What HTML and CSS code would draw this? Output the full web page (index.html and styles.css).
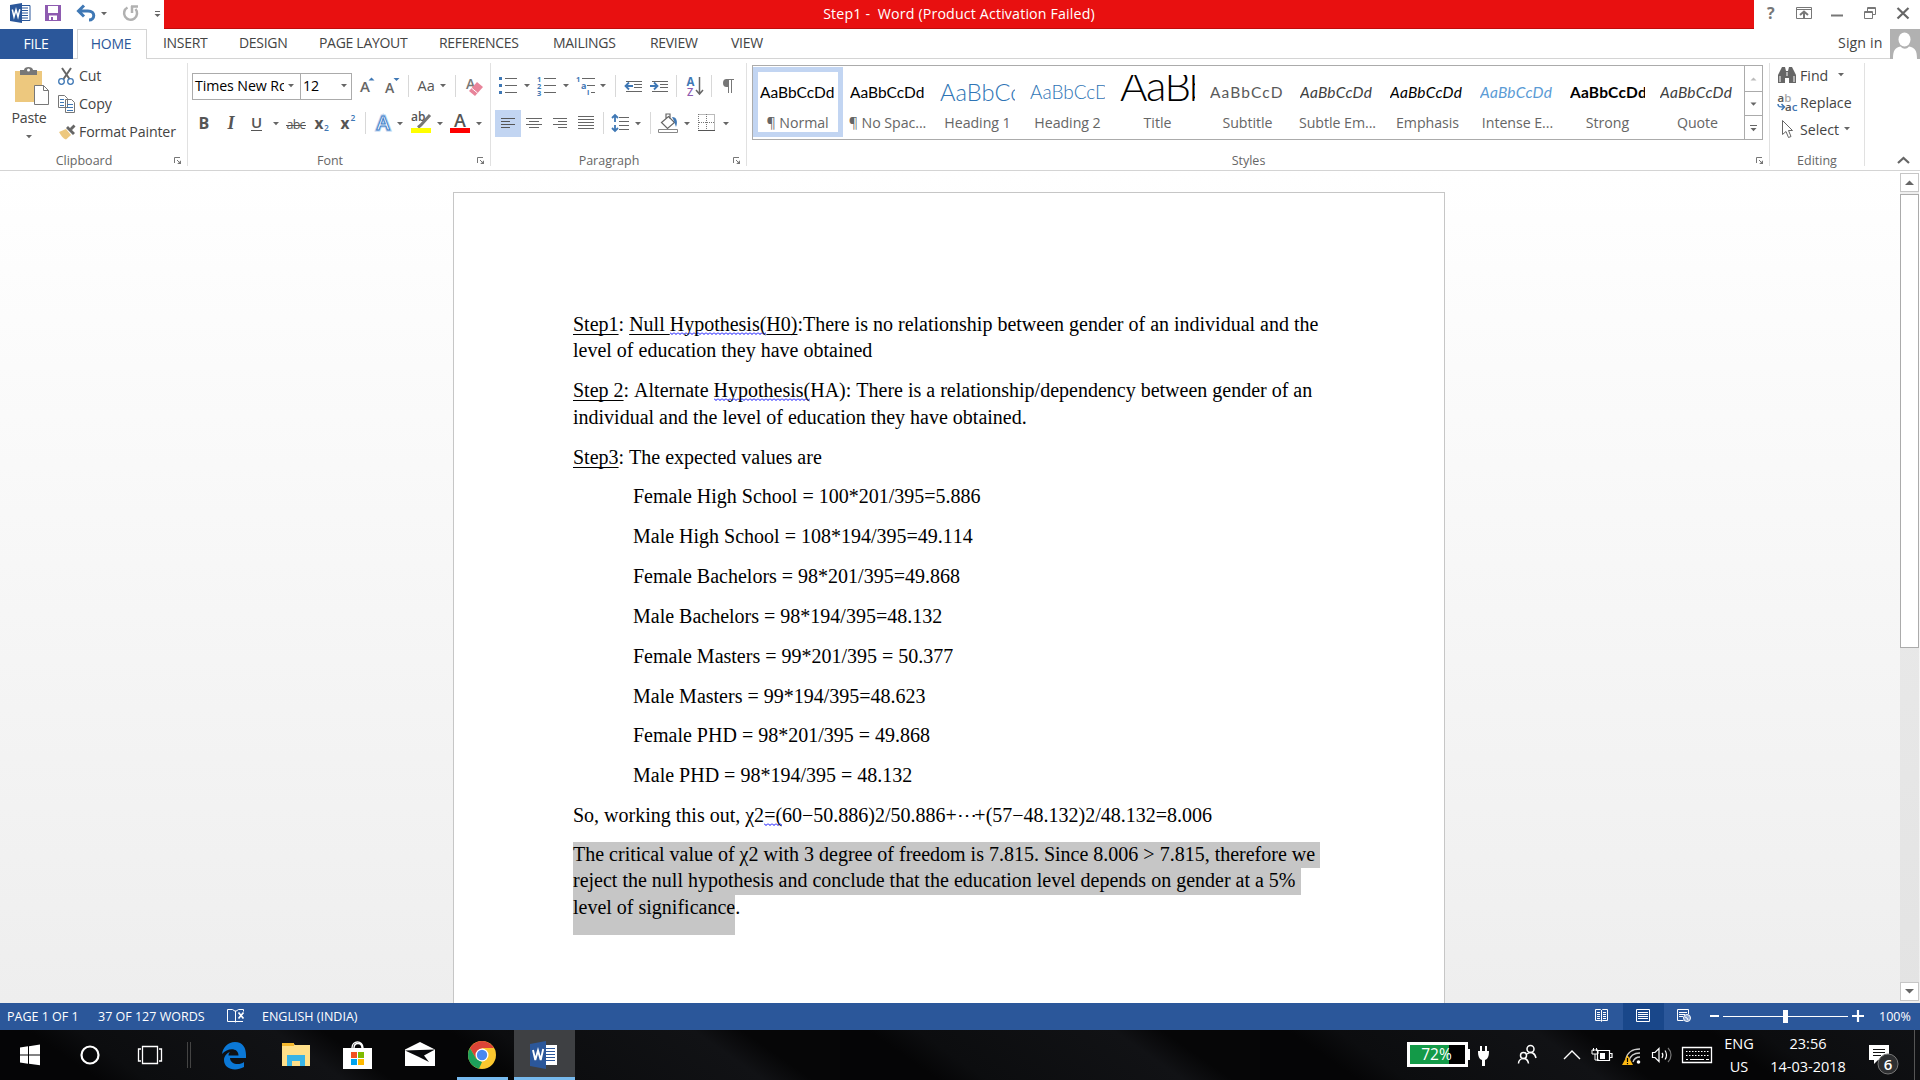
FILE: index.html
```html
<!DOCTYPE html>
<html lang="en">
<head>
<meta charset="utf-8">
<title>Step1 - Word</title>
<link rel="stylesheet" href="styles.css">
</head>
<body>
<svg class="defs" width="0" height="0">
  <defs>
    <path id="caret" d="M0 0h6l-3 3.2z" fill="#666"/>
    <g id="launch" fill="none" stroke="#777"><path d="M.5 6V.5H6M3 3l3.500 3.500"/><path d="M7 3.200V7H3.200z" fill="#777" stroke="none"/></g>
    <g id="word"><path d="M11 2.500h9v15h-9z" fill="#fff" stroke="#2b579a"/><path d="M12 5h6M12 7.500h6M12 10h6M12 12.500h6M12 15h6" stroke="#2b579a"/><path d="M0 2l12-2v20L0 18z" fill="#2b579a"/><path d="M2.300 6.500l1.700 7.300 2-7 2 7 1.800-7.500" fill="none" stroke="#fff" stroke-width="1.500"/></g>
  </defs>
</svg>
<div class="screen">
  <header class="titlebar">
    <div class="quick">
      <svg viewBox="0 0 38 29" width="38" height="29"><use href="#word" x="10" y="3"/></svg>
      <svg viewBox="38 0 32 29" width="32" height="29"><path d="M45 5h16v16H45z" fill="#8e5bb0"/><path d="M48 6h10v7H48zM49 15.500h8V20h-8z" fill="#fff"/><path d="M51 17h2v4h-2z" fill="#8e5bb0"/></svg>
      <svg viewBox="70 0 45 29" width="45" height="29"><path d="M79 11h9c8 0 7 9 1 9M84 5.500L78.500 11l5.500 5.500" fill="none" stroke="#3f78b5" stroke-width="3"/><use href="#caret" x="101" y="12"/></svg>
      <svg viewBox="115 0 35 29" width="35" height="29"><path d="M127.500 7.500a6.500 6.500 0 1 0 8 1.500M131 6.500h7M132 6v7" fill="none" stroke="#b1b1b1" stroke-width="2.500"/></svg>
      <svg viewBox="150 0 14 29" width="14" height="29"><path d="M155 11.500h5" stroke="#666"/><path d="M154.500 14h6l-3 3z" fill="#666"/></svg>
    </div>
    <div class="caption">Step1 -&nbsp; Word (Product Activation Failed)</div>
    <div class="winctl">
      <svg viewBox="1754 0 32 29" width="32" height="29"><text x="1767" y="18.500" font-size="16" font-weight="700" fill="#777">?</text></svg>
      <svg viewBox="1786 0 35 29" width="35" height="29" fill="none" stroke="#777"><path d="M1796.500 7.500h15v11h-15zM1797 9.500h14"/><path d="M1804 18v-6m-4 3l4-3.500 4 3.500" stroke-width="2"/></svg>
      <svg viewBox="1821 0 33 29" width="33" height="29"><path d="M1831 15.500h12" stroke="#777" stroke-width="2"/></svg>
      <svg viewBox="1854 0 33 29" width="33" height="29" fill="none" stroke="#777"><path d="M1864.500 11.500h8v7h-8zM1864 12.500h9M1867.500 11V7.500h8v7H1873M1867 8.500h9"/></svg>
      <svg viewBox="1887 0 33 29" width="33" height="29"><path d="M1897.500 8l11 10.500M1908.500 8l-11 10.500" stroke="#666" stroke-width="2.200"/></svg>
    </div>
  </header>

  <nav class="tabs">
    <div class="tab file">FILE</div>
    <div class="tab home">HOME</div>
    <div class="tab t-insert">INSERT</div>
    <div class="tab t-design">DESIGN</div>
    <div class="tab t-layout">PAGE LAYOUT</div>
    <div class="tab t-refs">REFERENCES</div>
    <div class="tab t-mail">MAILINGS</div>
    <div class="tab t-review">REVIEW</div>
    <div class="tab t-view">VIEW</div>
    <div class="signin">Sign in</div>
    <svg class="avatar" viewBox="0 0 30 30" width="30" height="30"><path d="M0 0h30v30H0z" fill="#b1b1b1"/><ellipse cx="14.500" cy="10.500" rx="6" ry="7" fill="#fff"/><path d="M3 30c0-9 2-11 7.500-12.500 3 3 6 3 8.500 0C25 19 27 21 27 30z" fill="#fff"/></svg>
  </nav>

  <section class="ribbon">
    <div class="group g-clip">
      <div class="tools">
        <div class="paste">
          <svg viewBox="0 63 56 44" width="56" height="44"><path d="M15 71h27v31H15z" fill="#edc87e"/><path d="M20 75v-5h4c0-4 9-4 9 0h4v5z" fill="#777"/><circle cx="28.500" cy="70" r="1.500" fill="#fff"/><path d="M34.500 85.500h9l5 5v14h-14z" fill="#fff" stroke="#777"/><path d="M43.500 85.500v5h5" fill="none" stroke="#777"/></svg>
          <span>Paste</span>
          <svg viewBox="0 128 56 16" width="56" height="16"><use href="#caret" x="26" y="135"/></svg>
        </div>
        <div class="cmds">
          <div class="cmd"><svg viewBox="56 63 24 28" width="24" height="28" fill="none"><path d="M62 68l7.500 11M71 68l-7.500 11" stroke="#666" stroke-width="2"/><circle cx="61.500" cy="81.500" r="2.800" stroke="#3f78b5" stroke-width="1.300"/><circle cx="70.500" cy="81.500" r="2.800" stroke="#3f78b5" stroke-width="1.300"/></svg><span>Cut</span></div>
          <div class="cmd"><svg viewBox="56 91 24 28" width="24" height="28"><path d="M58.500 95.500h6l3 3v9h-9zM65.500 99.500h6l3 3v10h-9z" fill="#fff" stroke="#777"/><path d="M60 99.500h4M60 102.500h4M60 105.500h4M67 104.500h6M67 107.500h6M67 110.500h6" stroke="#3f78b5"/></svg><span>Copy</span></div>
          <div class="cmd"><svg viewBox="56 119 24 28" width="24" height="28"><path d="M59 132l7-3 5 6-5 4.500c-3-1-5-4-7-7.500z" fill="#edc87e"/><path d="M66 128l2-2 7 7-2 2zM70 128l3.500-3.500 2 2L72 130z" fill="#666"/></svg><span>Format Painter</span></div>
        </div>
      </div>
      <div class="label"><span>Clipboard</span><svg width="8" height="8"><use href="#launch"/></svg></div>
    </div>

    <div class="group g-font">
      <div class="rows">
        <div class="row">
          <div class="combo name"><span>Times New Ro</span><svg viewBox="0 0 8 24" width="8" height="24"><use href="#caret" x="0" y="10"/></svg></div>
          <div class="combo size"><span>12</span><svg viewBox="0 0 8 24" width="8" height="24"><use href="#caret" x="0" y="10"/></svg></div>
          <svg viewBox="352 66 28 40" width="28" height="40"><text x="360" y="92" font-size="15" font-weight="600" fill="#666">A</text><path d="M368.500 80.500l3-3 3 3z" fill="#3f78b5"/></svg>
          <svg viewBox="380 66 29 40" width="29" height="40"><text x="385" y="93" font-size="14" font-weight="600" fill="#666">A</text><path d="M393.500 78l3 3 3-3z" fill="#3f78b5"/><path d="M408.500 75v22" stroke="#d8d8d8"/></svg>
          <svg viewBox="409 66 47 40" width="47" height="40"><text x="417.500" y="91" font-size="14.500" fill="#555">Aa</text><use href="#caret" x="440" y="84"/><path d="M455.500 75v22" stroke="#d8d8d8"/></svg>
          <svg viewBox="456 66 34 40" width="34" height="40"><text x="466" y="89" font-size="14" font-weight="600" fill="#777">A</text><path d="M469 91l8-9 6 5-8 9z" fill="#e8849a"/><path d="M471.500 88l6 5" stroke="#fff"/></svg>
        </div>
        <div class="row">
          <svg viewBox="192 106 27 40" width="27" height="40"><text x="198.500" y="129" font-size="16" font-weight="700" fill="#555">B</text></svg>
          <svg viewBox="219 106 25 40" width="25" height="40"><text x="227.500" y="129" font-size="18" font-weight="700" class="serif" font-style="italic" fill="#555">I</text></svg>
          <svg viewBox="244 106 38 40" width="38" height="40"><text x="251" y="128" font-size="15" font-weight="600" fill="#555">U</text><path d="M251 130.500h11" stroke="#555"/><use href="#caret" x="273" y="122"/></svg>
          <svg viewBox="282 106 29 40" width="29" height="40"><text x="286.500" y="129" font-size="12.500" textLength="19" fill="#555">abc</text><path d="M286 125.500h20" stroke="#555"/></svg>
          <svg viewBox="311 106 26 40" width="26" height="40"><text x="314.500" y="129" font-size="15.500" font-weight="700" fill="#555">x</text><text x="324" y="131" font-size="8.500" font-weight="600" fill="#3f78b5">2</text></svg>
          <svg viewBox="337 106 29 40" width="29" height="40"><text x="340.500" y="129" font-size="15.500" font-weight="700" fill="#555">x</text><text x="350.500" y="121" font-size="8.500" font-weight="600" fill="#3f78b5">2</text><path d="M365.500 112v22" stroke="#d8d8d8"/></svg>
          <svg viewBox="366 106 41 40" width="41" height="40"><text x="376.500" y="130" font-size="20" font-weight="600" fill="#fff" stroke="#b9d3f0" stroke-width="3">A</text><text x="376.500" y="130" font-size="20" font-weight="600" fill="#fff" stroke="#3f7fc9">A</text><use href="#caret" x="397" y="122"/></svg>
          <svg viewBox="407 106 39 40" width="39" height="40"><text x="411" y="121" font-size="12" font-weight="600" fill="#555">ab</text><path d="M430 115l-9 10-3 2.500" stroke="#777" stroke-width="3" fill="none"/><path d="M411 128h20v5h-20z" fill="#ff0"/><use href="#caret" x="437" y="122"/></svg>
          <svg viewBox="446 106 44 40" width="44" height="40"><text x="454" y="127" font-size="18" font-weight="600" fill="#555">A</text><path d="M450 128h20v5h-20z" fill="red"/><use href="#caret" x="476" y="122"/></svg>
        </div>
      </div>
      <div class="label"><span>Font</span><svg width="8" height="8"><use href="#launch"/></svg></div>
    </div>

    <div class="group g-para">
      <div class="rows">
        <div class="row">
          <svg viewBox="495 66 39 40" width="39" height="40"><path d="M505 78.500h12M505 85.500h12M505 92.500h12" stroke="#666"/><path d="M499 77h3v3h-3zM499 84h3v3h-3zM499 91h3v3h-3z" fill="#3f78b5"/><use href="#caret" x="524" y="84"/></svg>
          <svg viewBox="534 66 39 40" width="39" height="40"><path d="M544 78.500h12M544 85.500h12M544 92.500h12" stroke="#666"/><g class="tiny"><text x="537" y="82">1</text><text x="537" y="89">2</text><text x="537" y="96">3</text></g><use href="#caret" x="563" y="84"/></svg>
          <svg viewBox="573 66 43 40" width="43" height="40"><path d="M582 78.500h13M587 85.500h8M591 92.500h4" stroke="#666"/><g class="tiny"><text x="576" y="82">1</text><text x="581" y="89" font-size="9">a</text><text x="587" y="95">i</text></g><use href="#caret" x="600" y="84"/><path d="M615.500 75v22" stroke="#d8d8d8"/></svg>
          <svg viewBox="616 66 30 40" width="30" height="40"><path d="M626 81.500h16M634 84.500h8M634 87.500h8M626 91.500h16" stroke="#666"/><path d="M625 86h8m-4-3.500L625.500 86l3.500 3.500" fill="none" stroke="#3f78b5" stroke-width="1.800"/></svg>
          <svg viewBox="646 66 31 40" width="31" height="40"><path d="M652 81.500h16M660 84.500h8M660 87.500h8M652 91.500h16" stroke="#666"/><path d="M650 86h8m-4-3.500l3.500 3.500-3.500 3.500" fill="none" stroke="#3f78b5" stroke-width="1.800"/><path d="M676.500 75v22" stroke="#d8d8d8"/></svg>
          <svg viewBox="677 66 35 40" width="35" height="40"><text x="686.500" y="86" font-size="11.500" font-weight="700" fill="#3f78b5">A</text><text x="687" y="95.500" font-size="11" font-weight="600" fill="#8e5bb0">Z</text><path d="M699.500 77v17m-3.500-4l3.500 4 3.500-4" fill="none" stroke="#666" stroke-width="1.500"/><path d="M711.500 75v22" stroke="#d8d8d8"/></svg>
          <svg viewBox="712 66 34 40" width="34" height="40"><path d="M728 79h-1.500a3.500 4 0 0 0 0 8h1.500z" fill="#777"/><path d="M726 79.500h8M728.500 79v14M731.500 79v14" stroke="#777"/></svg>
        </div>
        <div class="row">
          <svg class="pressed" viewBox="495 110 26 27" width="26" height="27"><path d="M501 118.500h14M501 121.500h9M501 124.500h14M501 127.500h9" stroke="#555"/></svg>
          <svg viewBox="521 106 27 40" width="27" height="40"><path d="M526 118.500h16M529 121.500h10M526 124.500h16M529 127.500h10" stroke="#666"/></svg>
          <svg viewBox="548 106 25 40" width="25" height="40"><path d="M553 118.500h14M558 121.500h9M553 124.500h14M558 127.500h9" stroke="#666"/></svg>
          <svg viewBox="573 106 31 40" width="31" height="40"><path d="M578 116.500h16M578 119.500h16M578 122.500h16M578 125.500h16M578 128.500h16" stroke="#666"/><path d="M603.500 112v22" stroke="#d8d8d8"/></svg>
          <svg viewBox="604 106 47 40" width="47" height="40"><path d="M619 117.500h10M619 121.500h10M619 125.500h10M619 129.500h10" stroke="#666"/><path d="M615 116v6M615 125v6M612 118l3-3 3 3M612 128l3 3 3-3" stroke="#3f78b5" stroke-width="1.800" fill="none"/><use href="#caret" x="635" y="122"/><path d="M650.500 112v22" stroke="#d8d8d8"/></svg>
          <svg viewBox="651 106 42 40" width="42" height="40"><path d="M661.500 122.500l7-6 6 6-7 6zM666 119v-5h4v5" fill="none" stroke="#666" stroke-width="1.200"/><path d="M672 117c5 0 6 5 4 10l-2-6z" fill="#3f78b5"/><path d="M658.500 129.500h19v3h-19z" fill="#fff" stroke="#888"/><use href="#caret" x="684" y="122"/></svg>
          <svg viewBox="693 106 53 40" width="53" height="40"><path d="M698.500 114.500h16v16M698.500 114v16M706.500 114v16M699 122.500h16" fill="none" stroke="#777" stroke-dasharray="1 1"/><path d="M698 130.500h17" stroke="#555"/><use href="#caret" x="723" y="122"/></svg>
        </div>
      </div>
      <div class="label"><span>Paragraph</span><svg width="8" height="8"><use href="#launch"/></svg></div>
    </div>

    <div class="group g-styles">
      <div class="gallery">
        <div class="style on"><div class="sample">AaBbCcDd</div><p>¶ Normal</p></div>
        <div class="style"><div class="sample">AaBbCcDd</div><p>¶ No Spac...</p></div>
        <div class="style"><div class="sample h1">AaBbCc</div><p>Heading 1</p></div>
        <div class="style"><div class="sample h2">AaBbCcD</div><p>Heading 2</p></div>
        <div class="style"><div class="sample title">AaBb</div><p>Title</p></div>
        <div class="style"><div class="sample sub">AaBbCcD</div><p>Subtitle</p></div>
        <div class="style"><div class="sample em subtle">AaBbCcDd</div><p>Subtle Em...</p></div>
        <div class="style"><div class="sample em">AaBbCcDd</div><p>Emphasis</p></div>
        <div class="style"><div class="sample em intense">AaBbCcDd</div><p>Intense E...</p></div>
        <div class="style"><div class="sample strong">AaBbCcDd</div><p>Strong</p></div>
        <div class="style"><div class="sample em subtle">AaBbCcDd</div><p>Quote</p></div>
        <div class="spin">
          <svg viewBox="0 0 17 25" width="17" height="25"><path d="M5.500 14.500h6l-3-3z" fill="#bbb"/></svg>
          <svg viewBox="0 0 17 22" width="17" height="22"><use href="#caret" x="5.500" y="10"/></svg>
          <svg viewBox="0 0 17 23" width="17" height="23"><path d="M5 9.500h7" stroke="#666"/><use href="#caret" x="5.500" y="12"/></svg>
        </div>
      </div>
      <div class="label"><span>Styles</span><svg width="8" height="8"><use href="#launch"/></svg></div>
    </div>

    <div class="group g-edit">
      <div class="edits">
        <div class="cmd"><svg viewBox="1770 62 30 27" width="30" height="27"><path d="M1778 83V75l4-8h3l1 4h2l1-4h3l4 8v8h-7v-5h-4v5z" fill="#666"/><path d="M1780 76v6M1794 76v6M1787 72v4" stroke="#fff"/></svg><span class="w-find">Find</span><svg width="7" height="6"><use href="#caret" y="0"/></svg></div>
        <div class="cmd"><svg viewBox="1770 89 30 27" width="30" height="27"><text x="1777.500" y="101.500" font-size="11.500" font-weight="600" fill="#555">a<tspan fill="#aaa">b</tspan></text><text x="1785" y="111" font-size="11.500" font-weight="600" fill="#555">a<tspan fill="#3f78b5">c</tspan></text><path d="M1778 104c0 3 2 3 6 3m-2.500-3l3 3-3 3" fill="none" stroke="#3f78b5" stroke-width="1.500"/></svg><span>Replace</span></div>
        <div class="cmd"><svg viewBox="1770 116 30 27" width="30" height="27"><path d="M1782.500 120.500v14l3.500-3 2.500 6 2.500-1-2.500-6h4z" fill="#fff" stroke="#666"/></svg><span class="w-select">Select</span><svg width="7" height="6"><use href="#caret" y="0"/></svg></div>
      </div>
      <div class="label"><span>Editing</span></div>
    </div>
    <div class="collapse"><svg viewBox="0 0 13 8" width="13" height="8"><path d="M1 7l5.500-5L12 7" fill="none" stroke="#666" stroke-width="2.200"/></svg></div>
  </section>

  <main class="desk">
    <article class="page">
      <p><u>Step1</u>: <u>Null </u><span class="gram">Hypothesis(</span><u>H0)</u>:There is no relationship between gender of an individual and the<br>level of education they have obtained</p>
      <p><u>Step 2</u>: Alternate <span class="gram">Hypothesis(</span>HA): There is a relationship/dependency between gender of an<br>individual and the level of education they have obtained.</p>
      <p><u>Step3</u>: The expected values are</p>
      <p class="in">Female High School = 100*201/395=5.886</p>
      <p class="in">Male High School = 108*194/395=49.114</p>
      <p class="in">Female Bachelors = 98*201/395=49.868</p>
      <p class="in">Male Bachelors = 98*194/395=48.132</p>
      <p class="in">Female Masters = 99*201/395 = 50.377</p>
      <p class="in">Male Masters = 99*194/395=48.623</p>
      <p class="in">Female PHD = 98*201/395 = 49.868</p>
      <p class="in">Male PHD = 98*194/395 = 48.132</p>
      <p>So, working this out, χ2<span class="gram">=(</span>60−50.886)2/50.886+<span class="dots">⋯</span>+(57−48.132)2/48.132=8.006</p>
      <div class="sel">
        <div class="line mark">The critical value of χ2 with 3 degree of freedom is 7.815. Since 8.006 &gt; 7.815, therefore we</div>
        <div class="line mark">reject the null hypothesis and conclude that the education level depends on gender at a 5%</div>
        <div class="line"><span class="mark last">level of significance</span>.</div>
      </div>
    </article>
    <div class="scroll">
      <svg class="sbtn" viewBox="0 0 17 17" width="17" height="17"><path d="M4 11h9L8.500 6.500z" fill="#666"/></svg>
      <div class="thumb"></div>
      <svg class="sbtn down" viewBox="0 0 17 17" width="17" height="17"><path d="M4 6h9l-4.500 4.500z" fill="#666"/></svg>
    </div>
  </main>

  <footer class="status">
    <span class="s-page">PAGE 1 OF 1</span>
    <span class="s-words">37 OF 127 WORDS</span>
    <svg viewBox="220 1003 42 27" width="42" height="27" fill="none" stroke="#fff"><path d="M235.500 1010.500v12M235 1021.500h-7.500v-12h5l3 2 3-2h5v2M236 1021.500h7" /><path d="M238.500 1012.500l5 6m0-6l-5 6" stroke-width="1.700"/></svg>
    <span class="s-lang">ENGLISH (INDIA)</span>
    <div class="views">
      <svg viewBox="1580 1003 43 27" width="43" height="27" fill="none" stroke="#fff"><path d="M1595.500 1009.500h5l1 1 1-1h5v11h-5l-1 1-1-1h-5zM1601.500 1010v11M1597 1012.500h3M1597 1014.500h3M1597 1016.500h3M1597 1018.500h3M1603 1012.500h3M1603 1014.500h3M1603 1016.500h3M1603 1018.500h3"/></svg>
      <svg class="active" viewBox="1623 1003 41 27" width="41" height="27" fill="none" stroke="#fff"><path d="M1636.500 1009.500h13v12h-13zM1638 1012.500h10M1638 1014.500h10M1638 1016.500h10M1638 1018.500h10"/></svg>
      <svg viewBox="1664 1003 42 27" width="42" height="27" fill="none" stroke="#fff"><path d="M1688.500 1014v-4.500h-11v11h6M1679 1012.500h8M1679 1014.500h6M1679 1016.500h4"/><circle cx="1687" cy="1018" r="3.500" fill="#8aa5d0"/><path d="M1685 1017l2 1 1 2" /></svg>
      <svg viewBox="1706 1003 166 27" width="166" height="27"><path d="M1710 1016h9M1852 1016h12M1858 1010v12" stroke="#fff" stroke-width="2.200"/><path d="M1723 1016.500h125" stroke="#fff"/><path d="M1783 1010h5v13h-5z" fill="#fff"/></svg>
      <span class="s-zoom">100%</span>
    </div>
  </footer>

  <footer class="taskbar">
    <div class="apps">
      <svg viewBox="0 1030 60 50" width="60" height="50"><path d="M20 1047.500l8-1.200v8.200h-8zM29 1046.200l11-1.600v9.900H29zM20 1055.500h8v8.300l-8-1.200zM29 1055.500h11v9.800l-11-1.500z" fill="#fff"/></svg>
      <svg viewBox="60 1030 60 50" width="60" height="50"><circle cx="90" cy="1055" r="8.500" fill="none" stroke="#fff" stroke-width="2.200"/></svg>
      <svg viewBox="120 1030 60 50" width="60" height="50" fill="none" stroke="#fff" stroke-width="1.300"><path d="M142.500 1046.500h15v17h-15zM141 1049h-2.500v12h2.500M159 1049h2.500v12H159"/></svg>
      <svg viewBox="180 1030 30 50" width="30" height="50"><path d="M187.500 1042v26M190.500 1042v26" stroke="#444"/></svg>
      <svg viewBox="210 1030 60 50" width="60" height="50"><path d="M222 1054c1-7 6-12 13-12 8 0 11 6 11 13v3h-16c0 6 9 8 14 4v5c-9 5-20 2-20-7 0-4 3-7 6-8-1 1-1.500 2-1.500 3.500h10c0-8-11-8-16.500-1.500z" fill="#0b78d7"/></svg>
      <svg viewBox="270 1030 60 50" width="60" height="50"><path d="M282 1043h11l2 2h15v21h-28z" fill="#ffe08a"/><path d="M282 1043h12v3h-12z" fill="#f5b92e"/><path d="M287 1066v-11h18v11h-5v-5h-8v5z" fill="#38b4e6"/></svg>
      <svg viewBox="330 1030 60 50" width="60" height="50"><path d="M343 1048h29v21h-29z" fill="#fff"/><path d="M352 1048c0-8 11-8 11 0M354 1048c0-6 8-6 8 0" fill="none" stroke="#fff" stroke-width="1.400"/><path d="M351 1052h6v6h-6z" fill="#f25022"/><path d="M358 1052h6v6h-6z" fill="#7fba00"/><path d="M351 1059h6v6h-6z" fill="#00a4ef"/><path d="M358 1059h6v6h-6z" fill="#ffb900"/></svg>
      <svg viewBox="390 1030 60 50" width="60" height="50"><path d="M405 1049.500l15-7.500 15 7.500v16.500h-30z" fill="#fff"/><path d="M405 1050.500l30-1-11 6 5 6.500-11-5.500z" fill="#08090b"/></svg>
      <svg viewBox="450 1030 64 50" width="64" height="50"><circle cx="482" cy="1055" r="14" fill="#fbc72e"/><path d="M469.900 1048a14 14 0 0 1 24.200 0H482l-6 10.500z" fill="#dc4437"/><path d="M469.900 1048l6.100 10.500 6 3.500-3 6.700a14 14 0 0 1-9.100-20.700z" fill="#1da05b"/><circle cx="482" cy="1055" r="6.500" fill="#fff"/><circle cx="482" cy="1055" r="5.200" fill="#4a88f0"/><path d="M457 1077h51v3h-51z" fill="#76b9ed"/></svg>
      <svg class="current" viewBox="514 1030 61 50" width="61" height="50"><path d="M544 1045h13v20h-13z" fill="#fff"/><path d="M546 1048.500h9M546 1051.500h9M546 1054.500h9M546 1057.500h9M546 1060.500h9" stroke="#2b579a"/><path d="M530 1044l16-3v28l-16-3z" fill="#2b579a"/><path d="M533 1050l2.300 10 2.700-9.500 2.700 9.500 2.500-11" fill="none" stroke="#fff" stroke-width="1.900"/><path d="M514 1077h61v3h-61z" fill="#76b9ed"/></svg>
    </div>
    <div class="tray">
      <div class="battery"><span>72%</span></div>
      <svg viewBox="1471 1030 29 50" width="29" height="50"><path d="M1478 1051h11c0 5-1 8-4 9v6h-3v-6c-3-1-4-4-4-9zM1480 1046h2v6h-2zM1485 1046h2v6h-2z" fill="#fff"/></svg>
      <svg viewBox="1500 1030 55 50" width="55" height="50" fill="none" stroke="#fff" stroke-width="1.500"><circle cx="1530.500" cy="1049" r="3.500"/><circle cx="1523.500" cy="1055.500" r="3"/><path d="M1518.500 1063.500c0-6 9-7 10 0M1527 1054c4-3 8-1 9 4"/></svg>
      <svg viewBox="1555 1030 31 50" width="31" height="50"><path d="M1564 1059l8-8 8 8" fill="none" stroke="#fff" stroke-width="1.400"/></svg>
      <svg viewBox="1586 1030 30 50" width="30" height="50"><path d="M1597.500 1050.500h12v10h-12zM1610 1053.500h2v4h-2" fill="none" stroke="#fff" stroke-width="1.200"/><path d="M1600 1053h5v6h-5z" fill="#fff"/><path d="M1592 1050h6v4h-6zM1593.500 1048v3M1596.500 1048v3M1595 1054v6h4" fill="none" stroke="#fff"/></svg>
      <svg viewBox="1616 1030 30 50" width="30" height="50"><path d="M1626 1059c1-6 6-10 14-10M1629 1061c1-5 5-8 11-8M1633 1062c1-3 3-5 7-5" fill="none" stroke="#ccc" stroke-width="1.400"/><circle cx="1638.500" cy="1062" r="1.800" fill="#fff"/><path d="M1622 1065l5.500-10 5.500 10z" fill="#fdb813"/><path d="M1627.500 1058v4M1627.500 1063v1.200" stroke="#000" stroke-width="1.200"/></svg>
      <svg viewBox="1646 1030 32 50" width="32" height="50" fill="none" stroke="#fff" stroke-width="1.200"><path d="M1652.500 1052.500h2.500l4-4v13l-4-4h-2.500zM1662 1053c1 1 1 3 0 5M1665 1050.500c2 2.500 2 6.500 0 9"/><path d="M1668 1048c4 4 4 10 0 14" stroke="#777"/></svg>
      <svg viewBox="1678 1030 38 50" width="38" height="50" fill="none" stroke="#fff"><path d="M1682.500 1047.500h29v15h-29z" stroke-width="1.300"/><path d="M1686 1051.500h23M1686 1055.500h23" stroke-dasharray="1.500 1.500"/><path d="M1686 1059.500h2M1690 1059.500h14M1706 1059.500h3"/></svg>
      <div class="two lang">ENG<br>US</div>
      <div class="two clock">23:56<br>14-03-2018</div>
      <svg viewBox="1860 1030 54 50" width="54" height="50"><path d="M1869 1045h20v15h-11l-4 4v-4h-5z" fill="#fff"/><path d="M1873 1049.500h12M1873 1052.500h12M1873 1055.500h8" stroke="#111"/><circle cx="1888" cy="1064" r="10" fill="#2e2f31" stroke="#777"/><text x="1883.800" y="1069.500" font-size="15" font-weight="600" fill="#fff">6</text></svg>
    </div>
  </footer>
</div>
</body>
</html>
```

FILE: styles.css
```css
* { box-sizing: border-box; }
body { margin: 0; background: #fff; font-family: "Open Sans", "Noto Sans", sans-serif; font-size: 14.200px; color: #444; }
.defs { position: absolute; }
svg { display: block; flex: none; }
.serif { font-family: "Liberation Serif", serif; }
.screen { width: 1920px; height: 1080px; display: flex; flex-direction: column; overflow: hidden; white-space: nowrap; }

.titlebar { display: flex; height: 29px; flex: none; }
.quick, .winctl { display: flex; flex: none; }
.caption { flex: 1; background: #e81010; border-bottom: 1px solid #c00c0c; color: #fff; text-align: center; line-height: 28px; letter-spacing: .16px; }

.tabs { display: flex; height: 30px; flex: none; align-items: stretch; border-bottom: 1px solid #d4d4d4; line-height: 28px; }
.tab { font-size: 14px; letter-spacing: -.3px; }
.file { width: 73px; height: 30px; background: #2b579a; color: #fff; text-align: center; line-height: 30px; padding-right: 1px; }
.home { width: 70px; height: 30px; margin: 0 16px 0 4px; padding-right: 2px; background: #fff; border: 1px solid #d4d4d4; border-bottom: 0; color: #2b579a; text-align: center; line-height: 27px; }
.t-insert { width: 76px; }
.t-design { width: 80px; }
.t-layout { width: 120px; }
.t-refs { width: 114px; }
.t-mail { width: 97px; }
.t-review { width: 81px; }
.signin { margin-left: auto; width: 52px; letter-spacing: .1px; }

.ribbon { display: flex; height: 112px; flex: none; padding-top: 4px; border-bottom: 1px solid #d4d4d4; }
.group { display: flex; flex-direction: column; height: 103px; border-right: 1px solid #e1e1e1; flex: none; }
.g-clip { width: 188px; }
.g-font { width: 303px; }
.g-para { width: 256px; }
.g-styles { width: 1023px; }
.g-edit { width: 95px; }
.label { display: flex; align-items: center; margin-top: auto; height: 14px; padding-right: 5px; font-size: 12.500px; color: #666; margin-bottom: -2px; }
.label span { flex: 1; text-align: center; padding-left: 2px; line-height: 14px; }
.label svg { margin-top: -1px; }
.g-clip .label span { padding-left: 0; padding-right: 6px; }
.g-font .label span { padding-right: 7px; }
.g-para .label span { padding-left: 4px; padding-right: 10px; }
.g-styles .label span { padding-right: 8px; }
.g-edit .label { padding-right: 2px; }

.tools { display: flex; }
.paste { width: 56px; display: flex; flex-direction: column; align-items: center; }
.paste span { line-height: 21px; padding-left: 2px; letter-spacing: -.2px; }
.cmds { display: flex; flex-direction: column; }
.cmd { display: flex; align-items: center; height: 28px; }
.cmds span { margin: -3px 0 0 -1px; letter-spacing: -.15px; }

.rows { display: flex; flex-direction: column; padding: 3px 0 0 4px; }
.row { display: flex; align-items: center; height: 40px; }
.combo { display: flex; align-items: center; height: 27px; border: 1px solid #ababab; color: #000; flex: none; }
.combo span { overflow: hidden; padding-left: 2px; line-height: 24px; flex: none; }
.name { width: 109px; }
.name span { width: 91px; margin-right: 4px; letter-spacing: -.1px; }
.size { width: 52px; margin-left: -1px; }
.size span { width: 40px; }
.tiny { font-size: 7.500px; font-weight: 700; fill: #3f78b5; }
.pressed { background: #c2d5f2; align-self: flex-start; margin-top: 4px; }

.gallery { display: flex; width: 1011px; height: 75px; margin: 2px 0 0 5px; border: 1px solid #ababab; }
.style { width: 90px; height: 70px; margin-top: 1px; padding: 8px 8px 0 7px; flex: none; }
.on { padding: 3px 3px 0 2px; border: 5px solid #c2d5f2; }
.style p { margin: 0 -8px; text-align: center; color: #666; line-height: 34px; letter-spacing: -.05px; }
.sample { height: 31px; overflow: hidden; font-family: Lato, "Open Sans", sans-serif; font-size: 15.500px; line-height: 34px; color: #000; }
.h1 { font-size: 23.700px; font-weight: 300; color: #2e74b5; }
.h2 { font-size: 19px; font-weight: 300; color: #2e74b5; line-height: 33px; }
.title { font-size: 42px; font-weight: 300; line-height: 20px; letter-spacing: -1.500px; }
.sub { letter-spacing: 1.100px; color: #5a5a5a; }
.em { font-style: italic; letter-spacing: .25px; }
.subtle { color: #404040; }
.intense { color: #5b9bd5; }
.strong { font-weight: 700; letter-spacing: .2px; }
.spin { margin-left: auto; border-left: 1px solid #ababab; }
.spin svg + svg { border-top: 1px solid #ababab; height: 24px; }

.edits { margin-top: -1px; }
.edits .cmd { height: 27px; }
.w-find { width: 38px; }
.w-select { width: 44px; }
.collapse { display: flex; flex: 1; align-items: flex-end; justify-content: flex-end; padding: 0 10px 6px 0; }

.desk { display: flex; flex: 1; min-height: 0; padding-left: 453px; overflow: hidden; background: linear-gradient(#fff, #eee); }
.page { width: 992px; height: 900px; margin-top: 21px; padding: 118px 0 0 119px; background: #fff; border: 1px solid #c6c6c6; flex: none; font-family: "Liberation Serif", serif; font-size: 20px; font-kerning: none; line-height: 26.400px; color: #000; }
.page p { margin: 0 0 13.450px; }
.page .in { padding-left: 60px; }
.page u { text-underline-offset: 3px; text-decoration-thickness: 1px; text-decoration-skip-ink: none; }
.gram { background: url("data:image/svg+xml,%3Csvg xmlns='http://www.w3.org/2000/svg' width='4' height='3'%3E%3Cpath d='M0 .5l2 2 2-2' fill='none' stroke='%2300f'/%3E%3C/svg%3E") repeat-x left bottom; }
.dots { letter-spacing: -2.500px; }
.sel { margin-top: 1px; }
.line { width: fit-content; height: 26.450px; line-height: 25px; }
.line.mark { padding-right: 5px; }
.mark { background: #c6c6c6; }
.last { display: inline-block; height: 40px; }

.scroll { display: flex; flex-direction: column; width: 19px; margin: 2px 1px 2px auto; background: linear-gradient(#eee, #e3e3e3); }
.sbtn { width: 19px; height: 19px; border: 1px solid #c6c6c6; background: #fff; }
.down { margin-top: auto; }
.thumb { height: 454px; margin-top: 2px; background: #fff; border: 1px solid #ababab; }

.status { display: flex; height: 27px; flex: none; padding-left: 7px; background: #2b579a; color: #fff; font-size: 12.500px; line-height: 27px; }
.s-page { width: 91px; }
.s-words { width: 122px; }
.views { display: flex; margin-left: auto; }
.active { background: #19478a; }
.s-zoom { width: 48px; padding-left: 7px; }

.taskbar { display: flex; height: 50px; flex: none; color: #fff; background: linear-gradient(215deg, #060607 20%, #111215 30%, #0c0d0f 70%, #050506 80%) 0 0 / 420px 50px; }
.apps, .tray { display: flex; }
.current { background: #3e4043; }
.tray { margin-left: auto; width: 508px; margin-right: 5px; border-right: 1px solid #555; }
.battery { width: 61px; height: 25px; margin: 12px 3px 0 0; border: 3px solid #fff; background: linear-gradient(90deg, #139a48 70%, #000 70%); line-height: 19px; text-align: center; font-size: 15.500px; position: relative; }
.battery::after { content: ""; position: absolute; right: -5px; top: 4px; width: 3px; height: 11px; background: #fff; }
.battery span { padding-right: 2px; }
.two { text-align: center; line-height: 23px; padding-top: 2px; font-size: 14.500px; }
.lang { width: 46px; }
.clock { width: 98px; padding-right: 6px; }
```
